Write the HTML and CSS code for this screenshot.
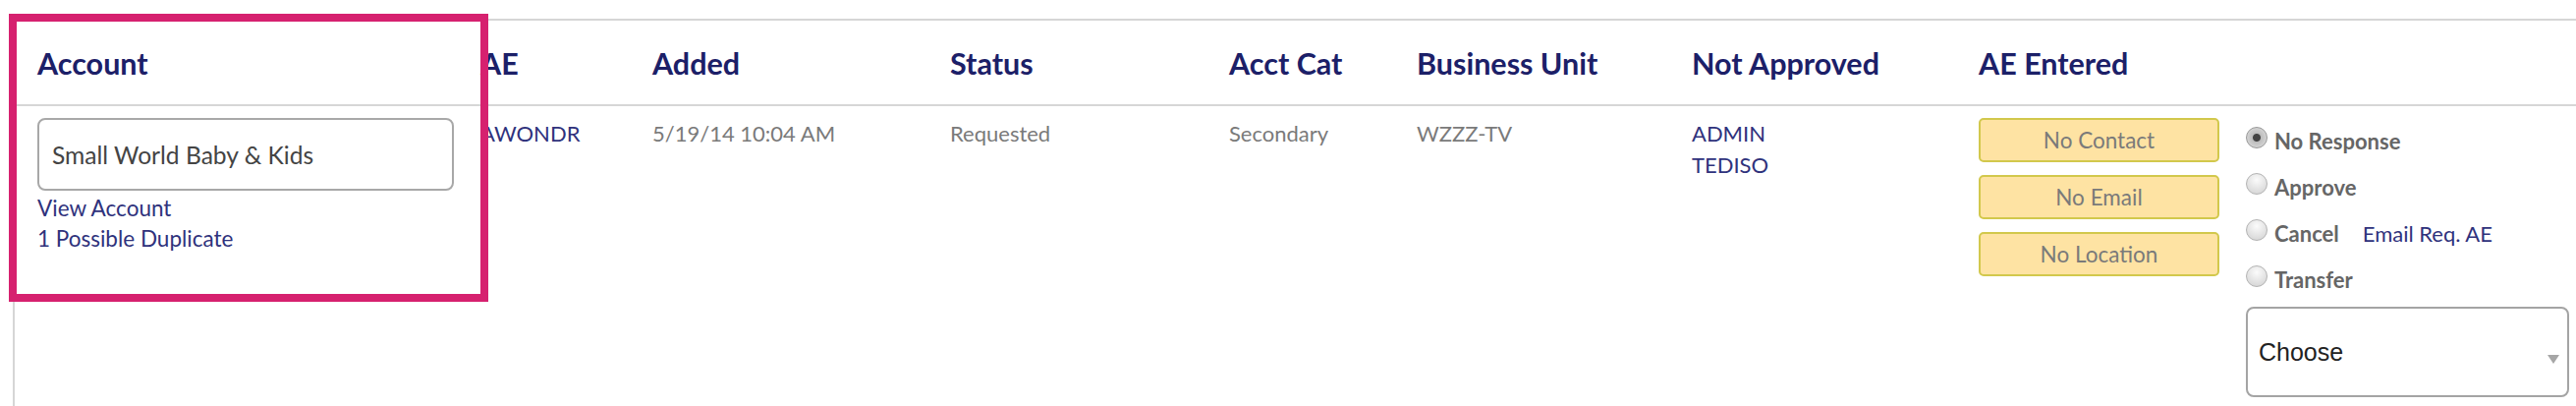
FILE: index.html
```html
<!DOCTYPE html>
<html lang="en">
<head>
	<meta charset="UTF-8">
	<title>Account Requests</title>
<link rel="stylesheet" href="styles.css">
</head>
<body>
	<div class="requests">
		<div class="head">Account</div>
		<div class="head">AE</div>
		<div class="head">Added</div>
		<div class="head">Status</div>
		<div class="head">Acct Cat</div>
		<div class="head">Business Unit</div>
		<div class="head">Not Approved</div>
		<div class="head">AE Entered</div>
		<div class="head"></div>

		<div class="cell">
			<input class="acct-name" type="text" value="Small World Baby &amp; Kids">
			<div class="acct-links">
				<a href="#">View Account</a>
				<a href="#">1 Possible Duplicate</a>
			</div>
		</div>
		<div class="cell"><a href="#">AWONDR</a></div>
		<div class="cell">5/19/14 10:04 AM</div>
		<div class="cell">Requested</div>
		<div class="cell">Secondary</div>
		<div class="cell">WZZZ-TV</div>
		<div class="cell stack">
			<a href="#">ADMIN</a>
			<a href="#">TEDISO</a>
		</div>
		<div class="cell flags">
			<span class="flag">No Contact</span>
			<span class="flag">No Email</span>
			<span class="flag">No Location</span>
		</div>
		<div class="cell actions">
			<label class="choice"><input type="radio" name="act" checked>No Response</label>
			<label class="choice"><input type="radio" name="act">Approve</label>
			<label class="choice"><input type="radio" name="act">Cancel<a class="mail" href="#">Email Req. AE</a></label>
			<label class="choice"><input type="radio" name="act">Transfer</label>
			<div class="pick">
				<select>
					<option>Choose</option>
				</select>
			</div>
		</div>
	</div>
	<div class="highlight"></div>
</body>
</html>
```

FILE: styles.css
```css
*{
	margin: 0;
	padding: 0;
	box-sizing: border-box;
}
a{
	text-decoration: none;
	color: #2f327c;
}
body{
	position: relative;
	height: 413px;
	overflow: hidden;
	padding: 19px 0 0 13px;
	font-family: Lato, "Open Sans", sans-serif;
	font-size: 22px;
	line-height: 32px;
	color: #7a7a7a;
	background: #fff;
}
.requests{
	display: grid;
	grid-template-columns: 451px 175px 303px 284px 191px 280px 292px 272px 359px;
	grid-template-rows: 87px auto;
	height: 394px;
	border-top: 2px solid #d6d6d6;
	border-left: 2px solid #d6d6d6;
}
.head{
	display: flex;
	align-items: center;
	padding-left: 23px;
	border-bottom: 2px solid #d6d6d6;
	font-size: 30.5px;
	font-weight: bold;
	color: #1c2068;
}
.cell{
	padding: 12px 0 0 23px;
}
.stack a{display: block;}

/* account column */
.acct-name{
	display: block;
	width: 424px;
	height: 74px;
	padding-left: 13px;
	border: 2px solid #a8a8a8;
	border-radius: 8px;
	font-family: Lato, sans-serif;
	font-size: 24.6px;
	color: #444;
	outline: none;
}
.acct-links{
	margin-top: 2px;
	font-size: 22.5px;
	line-height: 31px;
}
.acct-links a{display: block;}

/* AE entered flags */
.flags{
	display: flex;
	flex-direction: column;
	gap: 13px;
}
.flag{
	display: block;
	width: 245px;
	height: 45px;
	line-height: 41px;
	text-align: center;
	font-size: 22.5px;
	background: #fee3a3;
	border: 2px solid #d2c84c;
	border-radius: 5px;
	color: #7a7a7a;
}

/* actions */
.choice{
	display: flex;
	align-items: center;
	height: 47px;
	font-weight: bold;
	color: #666;
}
.choice input{
	appearance: none;
	-webkit-appearance: none;
	width: 22px;
	height: 22px;
	margin: -8px 7px 0 0;
	border-radius: 50%;
	border: 1px solid #b3b3b3;
	background: radial-gradient(circle at 50% 30%, #fbfbfb, #d0d0d0);
}
.choice input:checked{
	border-color: #999;
	background: radial-gradient(circle, #444 0 3.5px, #bdbdbd 4.5px, #e4e4e4 100%);
}
.mail{
	margin-left: 24px;
	font-weight: normal;
}
.pick{
	position: relative;
	width: 329px;
	height: 92px;
	margin-top: 4px;
}
.pick select{
	appearance: none;
	-webkit-appearance: none;
	width: 100%;
	height: 100%;
	padding-left: 11px;
	border: 2px solid #a4a4a4;
	border-radius: 8px;
	background: #fff;
	font-family: "Liberation Sans", Arial, sans-serif;
	font-size: 25px;
	color: #222;
	outline: none;
}
.pick::after{
	content: "";
	position: absolute;
	right: 10px;
	top: 49px;
	border-left: 6px solid transparent;
	border-right: 6px solid transparent;
	border-top: 9px solid #a6a6a6;
}

/* review highlight */
.highlight{
	position: absolute;
	left: 9px;
	top: 14px;
	width: 488px;
	height: 293px;
	border: 8px solid #d6216f;
}
```
